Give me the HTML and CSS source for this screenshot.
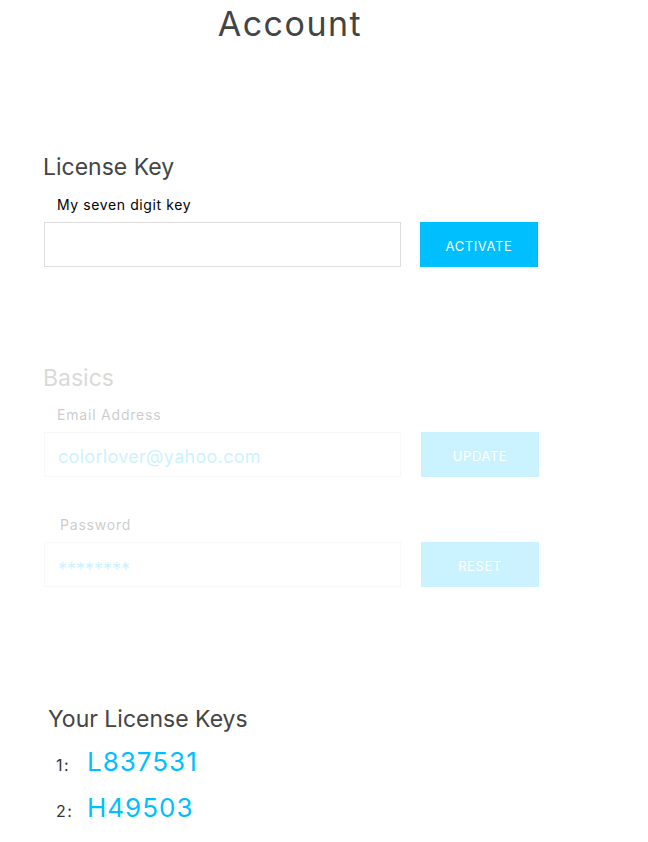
FILE: index.html
```html
<!DOCTYPE html>
<html>
<head>
<meta charset="utf-8">
<link rel="stylesheet" href="styles.css">
</head>
<body>
<div class="page">
  <header class="header"><h1 class="title">Account</h1></header>

  <section class="section license">
    <h2 class="section-title">License Key</h2>
    <label class="field-label">My seven digit key</label>
    <div class="row">
      <div class="input"></div>
      <button class="btn">ACTIVATE</button>
    </div>
  </section>

  <section class="section basics">
    <h2 class="section-title">Basics</h2>
    <label class="field-label email">Email Address</label>
    <div class="row">
      <div class="input"><span class="value">colorlover@yahoo.com</span></div>
      <button class="btn">UPDATE</button>
    </div>
    <label class="field-label pw">Password</label>
    <div class="row">
      <div class="input"><span class="value stars">********</span></div>
      <button class="btn">RESET</button>
    </div>
  </section>

  <section class="section keys">
    <h2 class="section-title">Your License Keys</h2>
    <ol class="key-list">
      <li class="key"><span class="num">1:</span><span class="code">L837531</span></li>
      <li class="key"><span class="num">2:</span><span class="code">H49503</span></li>
    </ol>
  </section>
</div>
</body>
</html>
```

FILE: styles.css
```css
* { box-sizing: border-box; }
html, body { margin: 0; padding: 0; background: #fff; }
body { font-family: Inter, "Noto Sans", sans-serif; color: #444; }

.page { width: 648px; }

.header { width: 580px; text-align: center; }
.title {
  margin: 0;
  font-size: 34px;
  font-weight: 400;
  letter-spacing: 1.5px;
  line-height: 48px;
  color: #444;
}

.section { padding-left: 44px; }
.section-title {
  margin: 0;
  font-size: 23px;
  font-weight: 400;
  line-height: 30px;
  color: #444;
  margin-left: -1px;
}

.license { padding-top: 104px; }
.field-label {
  display: block;
  margin: 13px 0 0 13px;
  font-size: 14px;
  line-height: 20px;
  letter-spacing: 0.6px;
  color: #000;
}
.field-label.email { margin-top: 12px; letter-spacing: 0.8px; }

.row { display: flex; gap: 19px; margin-top: 7px; }
.input {
  width: 357px;
  height: 45px;
  border: 1px solid #ddd;
  display: flex;
  align-items: center;
  padding: 4px 0 0 13px;
}
.value { font-size: 18px; color: #00bfff; letter-spacing: 0.3px; }
.stars { font-size: 18px; letter-spacing: 0; padding-top: 6px; }
.btn {
  width: 118px;
  height: 45px;
  border: 0;
  background: #00bfff;
  color: #fff;
  font-family: inherit;
  font-size: 13px;
  letter-spacing: 0.6px;
  padding-top: 4px;
}

.basics { padding-top: 96px; opacity: 0.2; }
.basics .row .btn { margin-left: 1px; }
.pw { margin-top: 38px; margin-left: 16px; letter-spacing: 0.8px; }

.keys { padding-top: 117px; padding-left: 49px; }
.key-list { list-style: none; margin: 12px 0 0 0; padding: 0 0 0 7px; }
.key { display: flex; align-items: baseline; height: 46px; }
.num { width: 31px; font-size: 16px; letter-spacing: 1.5px; color: #333; }
.code { font-size: 26px; color: #00bfff; letter-spacing: 1px; }
```
